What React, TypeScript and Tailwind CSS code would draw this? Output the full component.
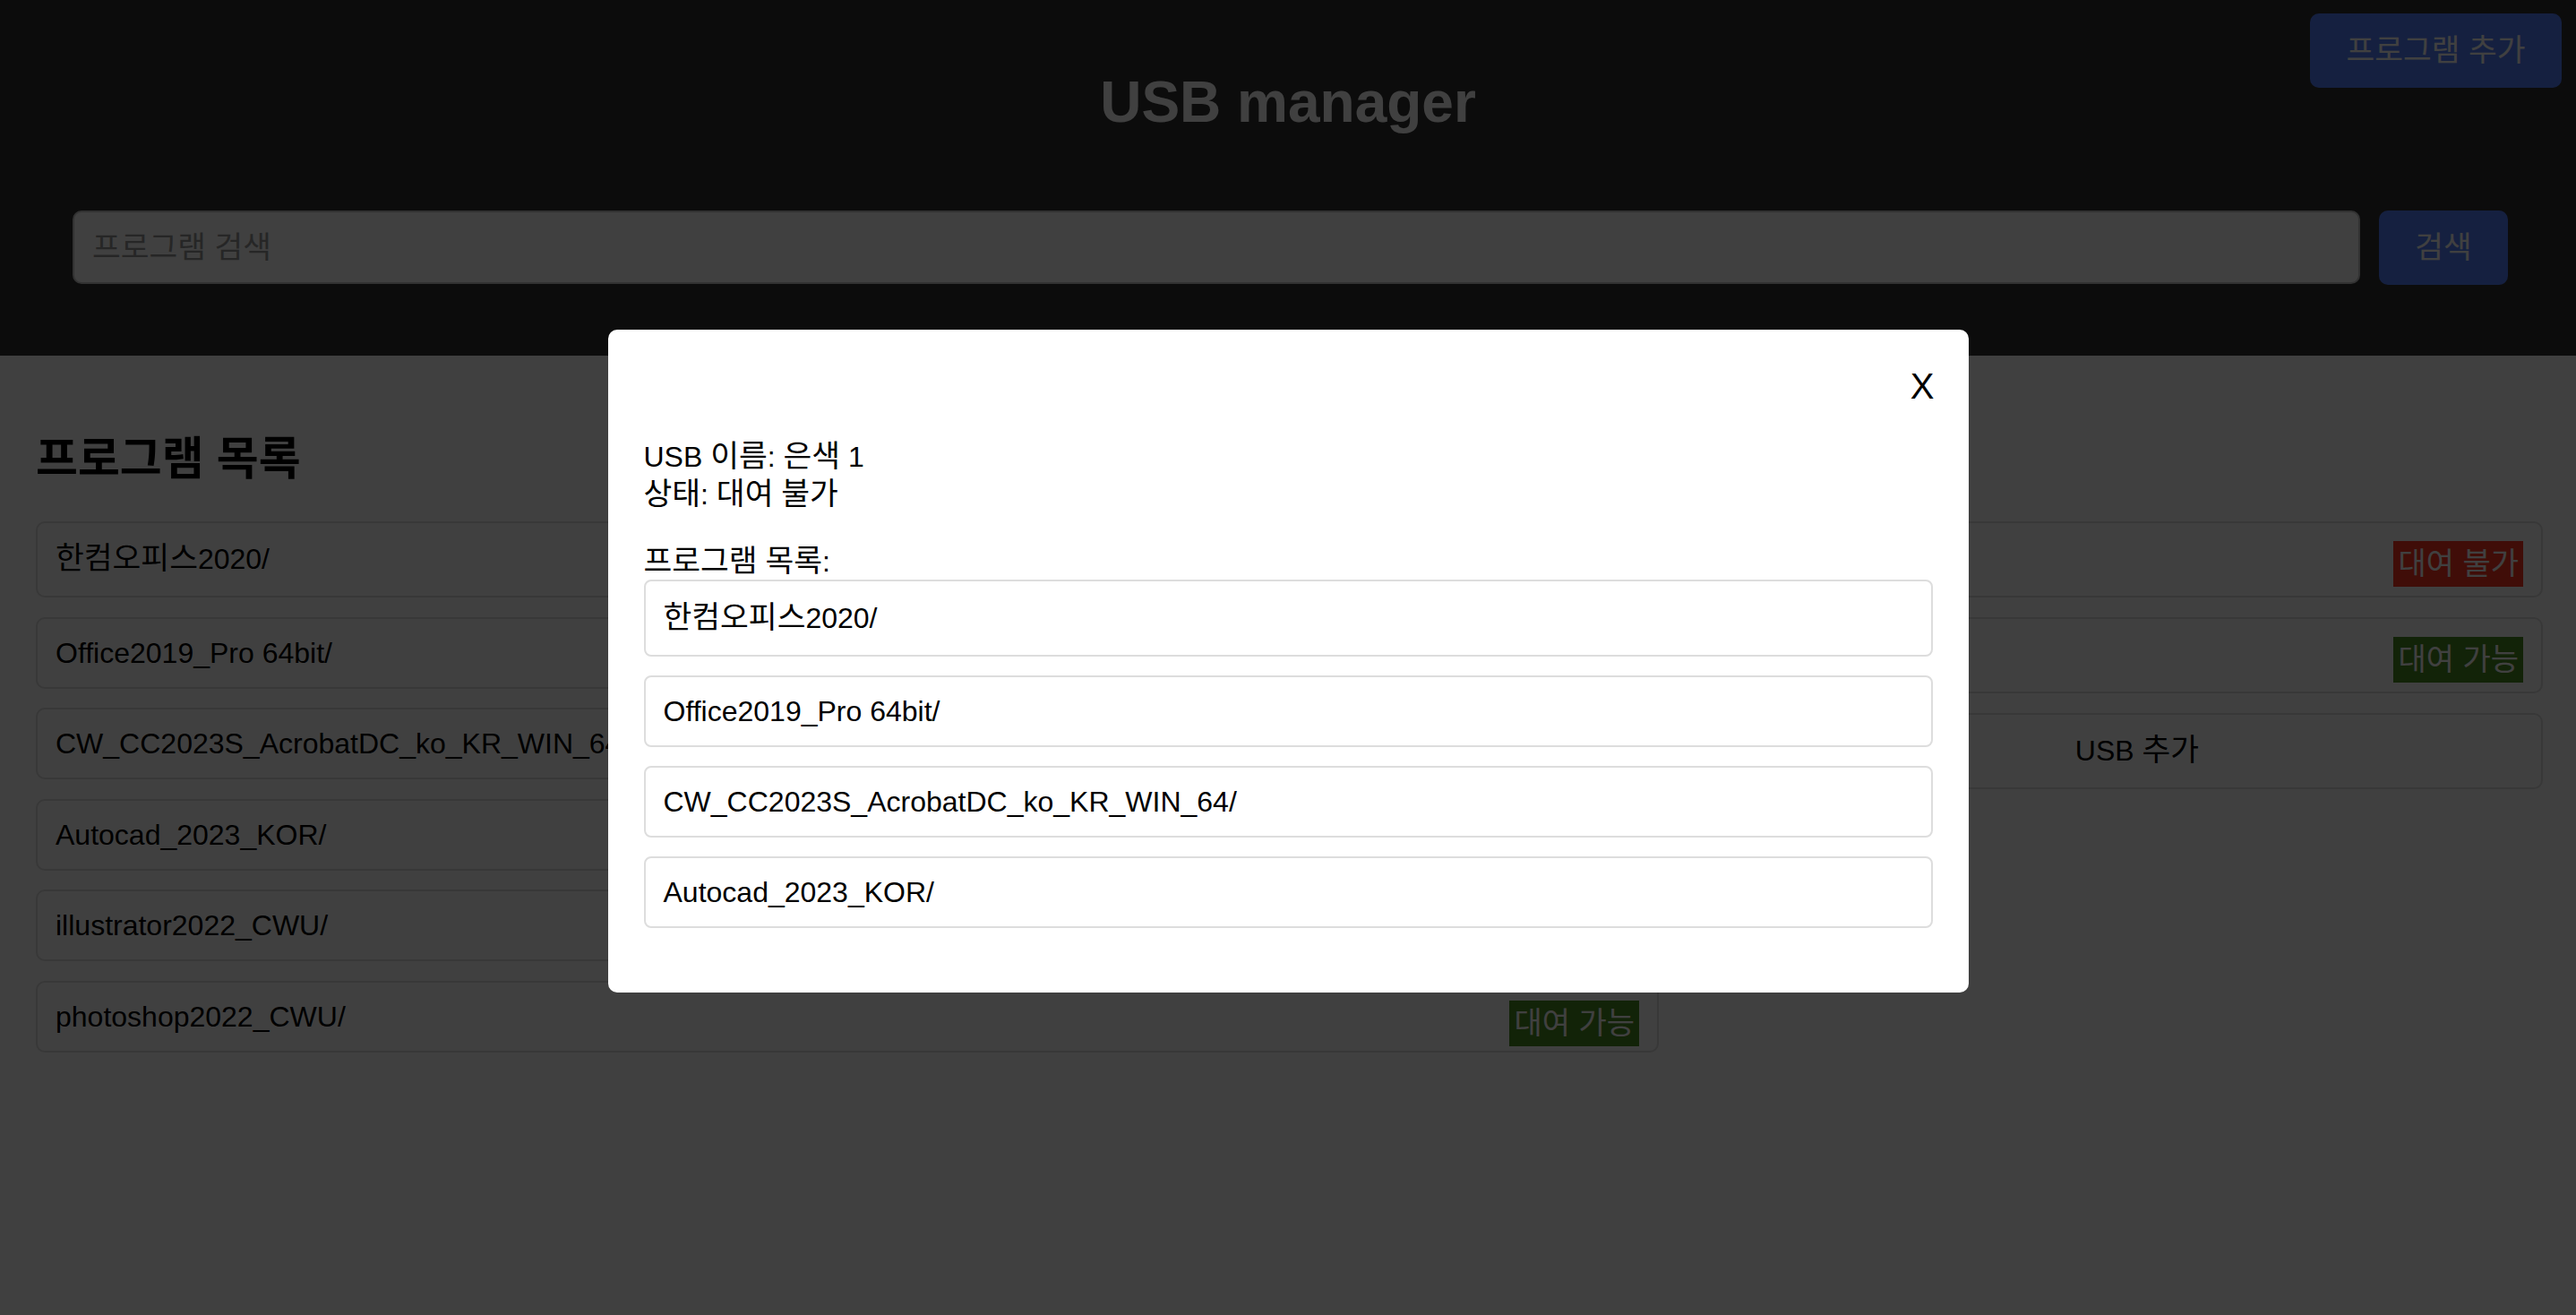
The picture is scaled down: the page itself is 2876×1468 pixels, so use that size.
import React from "react";

type Program = { name: string; ko: boolean; ok: boolean };

const programs: Program[] = [
  { name: "한컴오피스2020/", ko: true, ok: true },
  { name: "Office2019_Pro 64bit/", ko: false, ok: true },
  { name: "CW_CC2023S_AcrobatDC_ko_KR_WIN_64/", ko: false, ok: true },
  { name: "Autocad_2023_KOR/", ko: false, ok: true },
  { name: "illustrator2022_CWU/", ko: false, ok: true },
  { name: "photoshop2022_CWU/", ko: false, ok: true },
];

const modalPrograms = [
  { name: "한컴오피스2020/", ko: true },
  { name: "Office2019_Pro 64bit/", ko: false },
  { name: "CW_CC2023S_AcrobatDC_ko_KR_WIN_64/", ko: false },
  { name: "Autocad_2023_KOR/", ko: false },
];

// Wrap Hangul runs so that they get the slightly wider proportions of the reference.
function K({ text }: { text: string }) {
  const parts = text.split(/([\uAC00-\uD7A3]+)/);
  return (
    <>
      {parts.map((part, i) =>
        /[\uAC00-\uD7A3]/.test(part) ? (
          <span key={i} className="text-[1.08em] leading-none">
            {part}
          </span>
        ) : (
          <React.Fragment key={i}>{part}</React.Fragment>
        )
      )}
    </>
  );
}

function Badge({ ok }: { ok: boolean }) {
  return (
    <span
      className={
        ok
          ? "float-right bg-[#4a8a22] px-[5px] py-[4px] text-[34px] leading-[43px] text-white"
          : "float-right bg-[#ff3421] px-[5px] py-[4px] text-[34px] leading-[43px] text-white"
      }
    >
      {ok ? "대여 가능" : "대여 불가"}
    </span>
  );
}

export default function App() {
  return (
    <div className="relative min-h-screen bg-white font-['Liberation_Sans','Noto_Sans_CJK_KR',sans-serif] text-black">
      <header className="bg-[#333333] pt-[77px] pb-[79px]">
        <h1 className="text-center text-[64px] font-bold leading-[74px] text-white">USB manager</h1>
        <div className="mt-[84px] flex gap-[21px] pl-[81px] pr-[76px]">
          <input
            className="h-[82px] flex-1 rounded-[10px] border-2 border-[#c8c8c8] bg-white px-[20px] text-[34.5px] text-black outline-none placeholder:text-[#999999]"
            placeholder="프로그램 검색"
          />
          <button className="h-[83px] w-[144px] rounded-[10px] bg-[#5580ff] text-[34.5px] text-white">검색</button>
        </div>
      </header>

      <button className="absolute right-[16px] top-[15px] h-[83px] w-[281px] rounded-[10px] bg-[#5580ff] text-[34.5px] text-white">
        프로그램 추가
      </button>

      <main className="flex gap-[81px] pl-[40px] pr-[37px] pt-[88px]">
        <section className="min-w-0 flex-[2]">
          <h2 className="mb-[41px] text-[51px] font-bold leading-[56px]">프로그램 목록</h2>
          <div>
            {programs.map((p) => (
              <div
                key={p.name}
                className={
                  p.ko
                    ? "mb-[21.5px] rounded-[10px] border-2 border-[#dddddd] bg-white p-[20px] text-[32px] leading-[41px]"
                    : "mb-[21.5px] rounded-[10px] border-2 border-[#dddddd] bg-white p-[20px] text-[32px] leading-[36px]"
                }
              >
                <Badge ok={p.ok} />
                <K text={p.name} />
              </div>
            ))}
          </div>
        </section>
        <section className="min-w-0 flex-[1]">
          <h2 className="mb-[41px] text-[48px] font-bold leading-[56px]">
            <K text="USB 목록" />
          </h2>
          <div>
            <div className="mb-[22px] rounded-[10px] border-2 border-[#dddddd] bg-white p-[20px] text-[32px] leading-[41px]">
              <Badge ok={false} />
              <K text="은색 1" />
            </div>
            <div className="mb-[22px] rounded-[10px] border-2 border-[#dddddd] bg-white p-[20px] text-[32px] leading-[41px]">
              <Badge ok={true} />
              <K text="은색 2" />
            </div>
            <div className="mb-[22px] rounded-[10px] border-2 border-[#dddddd] bg-white p-[20px] text-center text-[32px] leading-[41px]">
              <K text="USB 추가" />
            </div>
          </div>
        </section>
      </main>

      <div className="fixed inset-0 flex items-center justify-center bg-[#000000bf] pt-[8px]">
        <div className="w-[1519px] rounded-[10px] bg-white px-[40px] pb-[72px] pt-[40px] text-black">
          <div className="flex justify-end">
            <span className="mr-[-2px] text-[40px] leading-[46px]">X</span>
          </div>
          <p className="mt-[35px] text-[32px] leading-[42px]">
            <K text="USB 이름: 은색 1" />
            <br />
            <K text="상태: 대여 불가" />
          </p>
          <p className="mt-[34px] text-[32px] leading-[40px]">
            <K text="프로그램 목록:" />
          </p>
          <div>
            {modalPrograms.map((p, i) => (
              <div
                key={p.name}
                className={
                  (p.ko
                    ? "rounded-[8px] border-2 border-[#dddddd] bg-white p-[20px] text-[32px] leading-[42px]"
                    : "rounded-[8px] border-2 border-[#dddddd] bg-white p-[20px] text-[32px] leading-[36px]") +
                  (i < modalPrograms.length - 1 ? " mb-[21px]" : "")
                }
              >
                <K text={p.name} />
              </div>
            ))}
          </div>
        </div>
      </div>
    </div>
  );
}
